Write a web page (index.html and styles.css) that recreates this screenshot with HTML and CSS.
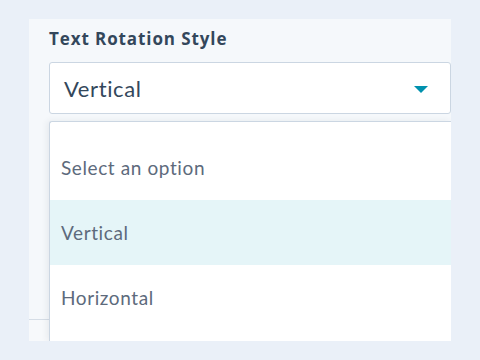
FILE: index.html
```html
<!DOCTYPE html>
<html>
<head>
<meta charset="utf-8">
<link rel="stylesheet" href="styles.css">
</head>
<body>
<div class="panel">
  <div class="field">
    <div class="label">Text Rotation Style</div>
    <div class="select">
      <span class="value">Vertical</span>
      <svg class="caret" width="14" height="7" viewBox="0 0 14 7"><path d="M0 0 L14 0 L7 7 Z" fill="#0091ae"/></svg>
    </div>
  </div>
  <div class="footer"></div>
  <div class="menu">
    <div class="option">Select an option</div>
    <div class="option active">Vertical</div>
    <div class="option">Horizontal</div>
  </div>
</div>
</body>
</html>
```
FILE: styles.css
```css
html, body {
  margin: 0;
  padding: 0;
  background: #eaf0f8;
  font-family: Lato, "Noto Sans", sans-serif;
}
.panel {
  position: relative;
  margin: 19px 0 0 29px;
  width: 422px;
  height: 322px;
  background: #f5f8fb;
  overflow: hidden;
  display: flex;
  flex-direction: column;
}
.field {
  padding: 9px 0 0 20px;
  display: flex;
  flex-direction: column;
  gap: 12px;
}
.label {
  font-family: "Open Sans", Lato, sans-serif;
  font-size: 17px;
  line-height: 22px;
  font-weight: 700;
  color: #33475b;
  letter-spacing: 0.9px;
}
.select {
  height: 50px;
  background: #fff;
  border: 1px solid #cbd6e2;
  border-radius: 3px;
  display: flex;
  align-items: center;
  justify-content: space-between;
  padding: 0 22px 0 14px;
}
.value {
  font-size: 22px;
  letter-spacing: 0.6px;
  color: #33475b;
}
.caret {
  display: block;
  margin-top: 3px;
}
.footer {
  margin-top: auto;
  height: 21px;
  border-top: 1px solid #d5dde6;
  background: #f7f9fb;
}
.menu {
  position: absolute;
  top: 102px;
  left: 20px;
  right: 0;
  bottom: 0;
  background: #fff;
  border-left: 1px solid #cbd6e2;
  border-top: 1px solid #cbd6e2;
  border-radius: 3px 0 0 0;
  box-shadow: -2px 0 6px rgba(45, 62, 80, 0.08);
  padding-top: 13px;
}
.option {
  height: 65px;
  display: flex;
  align-items: center;
  padding-left: 11px;
  font-size: 19px;
  letter-spacing: 0.6px;
  color: #5d6a7c;
}
.option.active {
  background: #e5f5f8;
}
```
